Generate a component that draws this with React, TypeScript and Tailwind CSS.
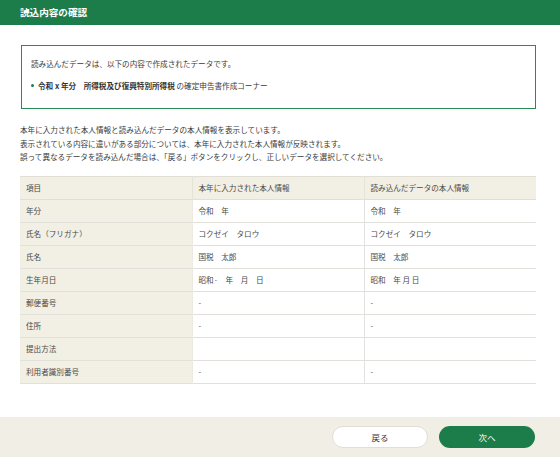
import React from 'react';

const rows: [string, string, string][] = [
  ['年分', '令和　年', '令和　年'],
  ['氏名（フリガナ）', 'コクゼイ　タロウ', 'コクゼイ　タロウ'],
  ['氏名', '国税　太郎', '国税　太郎'],
  ['生年月日', '昭和·　年　月　日', '昭和　年 月 日'],
  ['郵便番号', '-', '-'],
  ['住所', '-', '-'],
  ['提出方法', '', ''],
  ['利用者識別番号', '-', '-'],
];

export default function App() {
  return (
    <div
      className="w-full h-[457px] flex flex-col bg-white text-[#3a3a3a] overflow-hidden"
      style={{ fontFamily: '"Noto Sans CJK JP", "Noto Sans", sans-serif' }}
    >
      <header className="h-[25px] shrink-0 bg-[#1c7d4b] flex items-center px-[20px]">
        <h1 className="text-white font-bold text-[9.6px] leading-none">読込内容の確認</h1>
      </header>

      <main className="flex-1 pl-[20px] pr-[24px]">
        <div className="mt-[20px] ml-[1px] h-[64px] border-[1.5px] border-[#2a8a57] px-[9px] pt-[12px] text-[7.6px] leading-[11px]">
          <p>読み込んだデータは、以下の内容で作成されたデータです。</p>
          <div className="mt-[11px] flex items-center gap-[4px]">
            <span className="w-[3px] h-[3px] rounded-full bg-[#1c7d4b]" />
            <p>
              <span className="font-bold text-[#333]">令和 x 年分　所得税及び復興特別所得税</span>
              <span> の確定申告書作成コーナー</span>
            </p>
          </div>
        </div>

        <div className="mt-[14px] text-[7.6px] leading-[13.5px]">
          <p>本年に入力された本人情報と読み込んだデータの本人情報を表示しています。</p>
          <p>表示されている内容に違いがある部分については、本年に入力された本人情報が反映されます。</p>
          <p>誤って異なるデータを読み込んだ場合は、「戻る」ボタンをクリックし、正しいデータを選択してください。</p>
        </div>

        <table className="mt-[12px] w-[516px] table-fixed border-collapse text-[7.6px] text-[#4a4a4a]">
          <thead>
            <tr className="h-[23px] bg-[#f2efe4] border-t-[1.5px] border-b-[1.5px] border-[#e2dfd7]">
              <th className="w-[172px] text-left font-normal pl-[6px]">項目</th>
              <th className="w-[172px] text-left font-normal pl-[6px] border-l-[1.5px] border-[#e6e3da]">本年に入力された本人情報</th>
              <th className="text-left font-normal pl-[6px] border-l-[1.5px] border-[#e6e3da]">読み込んだデータの本人情報</th>
            </tr>
          </thead>
          <tbody>
            {rows.map(([label, current, loaded]) => (
              <tr key={label} className="h-[23px] border-b-[1.5px] border-[#e2e0da]">
                <td className="bg-[#f2efe4] pl-[6px]">{label}</td>
                <td className="pl-[6px] border-l-[1.5px] border-[#ece9e2]">{current}</td>
                <td className="pl-[6px] border-l-[1.5px] border-[#e2e2e2]">{loaded}</td>
              </tr>
            ))}
          </tbody>
        </table>
      </main>

      <footer className="h-[40px] shrink-0 bg-[#f1eee5] flex items-center justify-end gap-[11px] pr-[25px]">
        <button className="w-[96px] h-[22px] rounded-full bg-white border border-[#e2ded3] text-[8.5px] text-[#333]">
          戻る
        </button>
        <button className="w-[96px] h-[22px] rounded-full bg-[#1c7d4b] text-[8.5px] text-white">
          次へ
        </button>
      </footer>
    </div>
  );
}
